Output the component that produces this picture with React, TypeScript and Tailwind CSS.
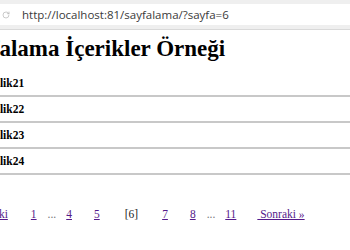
import React from "react";
import { RotateCw } from "lucide-react";

const rows = ["Baslik21", "Baslik22", "Baslik23", "Baslik24"];

const serif = { fontFamily: '"Liberation Serif", "Times New Roman", serif' };

export default function App() {
  return (
    <div className="w-[350px] h-[250px] overflow-hidden bg-white">
      {/* browser address bar */}
      <div className="h-[30px] bg-[#efefef] border-b border-[#d9d9d9] pt-[4px]">
        <div className="h-[21px] bg-white flex items-center">
          <RotateCw className="w-[8px] h-[8px] ml-[2px] text-[#b0b0b0]" strokeWidth={2} />
          <span
            className="ml-[12px] text-[11.5px] text-[#3a3a3a]"
            style={{ fontFamily: '"Open Sans", "Liberation Sans", sans-serif' }}
          >
            http://localhost:81/sayfalama/?sayfa=6
          </span>
        </div>
      </div>

      <div className="text-black" style={serif}>
        <h1 className="mt-[5px] ml-[-44px] h-[28px] leading-[28px] text-[23px] font-bold whitespace-nowrap">
          Sayfalama İçerikler Örneği
        </h1>

        <div className="mt-[8px]">
          {rows.map((r) => (
            <div key={r} className="border-b-2 border-[#c8c8c8]">
              <div className="ml-[-18px] h-[24px] leading-[24px] text-[11.5px] font-bold whitespace-nowrap">
                {r}
              </div>
            </div>
          ))}
        </div>

        <div className="mt-[31px] flex items-baseline h-[16px] leading-[16px] text-[11.5px] whitespace-nowrap">
          <a className="ml-[-34px] text-[#551a8b] underline">« Önceki</a>
          <a className="ml-[23px] text-[#551a8b] underline">1</a>
          <span className="ml-[11px] text-[#777]">...</span>
          <a className="ml-[10px] text-[#551a8b] underline">4</a>
          <a className="ml-[22px] text-[#551a8b] underline">5</a>
          <span className="ml-[25px] text-[#222]">[6]</span>
          <a className="ml-[24px] text-[#551a8b] underline">7</a>
          <a className="ml-[22px] text-[#551a8b] underline">8</a>
          <span className="ml-[11px] text-[#777]">...</span>
          <a className="ml-[10px] text-[#551a8b] underline">11</a>
          <a className="ml-[21px] text-[#551a8b] underline">{"\u00a0Sonraki »"}</a>
        </div>
      </div>
    </div>
  );
}
